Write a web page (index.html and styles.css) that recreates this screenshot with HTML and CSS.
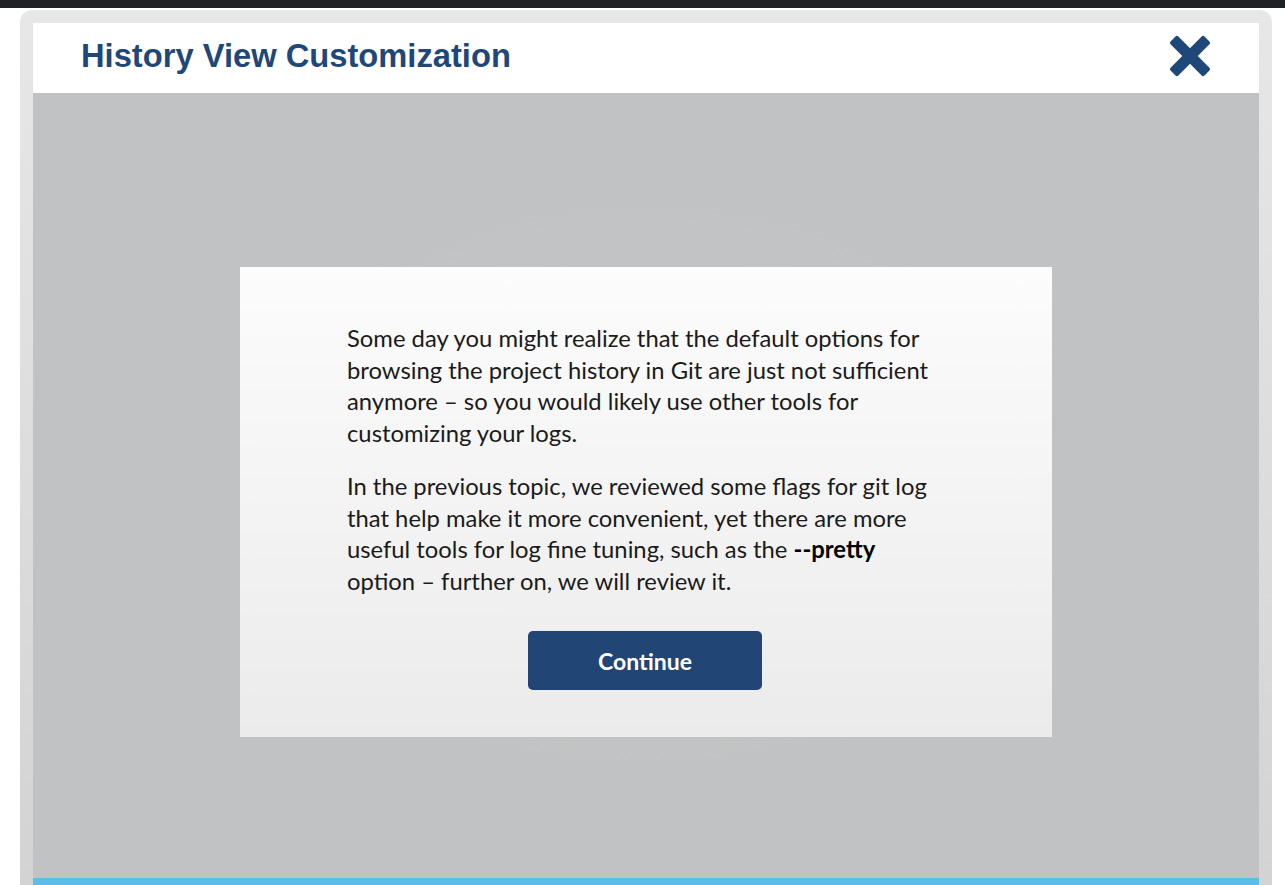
FILE: index.html
```html
<!DOCTYPE html>
<html lang="en">
<head>
<meta charset="utf-8">
<title>History View Customization</title>
<link rel="stylesheet" href="styles.css">
</head>
<body>
<div class="topbar"></div>
<div class="frame">
  <header class="header">
    <h1 class="title">History View Customization</h1>
    <button class="close" aria-label="Close">
      <svg width="42" height="42" viewBox="0 0 42 42">
        <g transform="translate(21 21)" fill="#1f4778">
          <rect x="-24" y="-5.5" width="48" height="11" rx="2" transform="rotate(45)"/>
          <rect x="-24" y="-5.5" width="48" height="11" rx="2" transform="rotate(-45)"/>
        </g>
      </svg>
    </button>
  </header>
  <main class="stage">
    <section class="dialog">
      <p>Some day you might realize that the default options for browsing the project history in Git are just not sufficient anymore – so you would likely use other tools for customizing your logs.</p>
      <p>In the previous topic, we reviewed some flags for git log that help make it more convenient, yet there are more useful tools for log fine tuning, such as the <b>--pretty</b> option – further on, we will review it.</p>
      <div class="actions"><button class="continue">Continue</button></div>
    </section>
  </main>
  <div class="bottombar"></div>
</div>
</body>
</html>
```

FILE: styles.css
```css
html, body {
  margin: 0;
  padding: 0;
  background: #ffffff;
  overflow: hidden;
  height: 885px;
}
.topbar {
  height: 8px;
  background: #202124;
}
.frame {
  box-sizing: border-box;
  margin: 2px 0 0 20px;
  width: 1252px;
  height: 875px;
  padding: 13px 13px 0;
  border-radius: 12px 12px 0 0;
  background: linear-gradient(#e7e7e7, #d3d3d3);
  display: flex;
  flex-direction: column;
}
.header {
  height: 70px;
  flex: none;
  background: #ffffff;
  display: flex;
  align-items: center;
  justify-content: space-between;
  padding: 0 48px;
}
.title {
  margin: 0 0 5px;
  font-family: "Liberation Sans", Arial, sans-serif;
  font-weight: bold;
  font-size: 32.7px;
  color: #1f4778;
}
.close {
  border: 0;
  background: none;
  padding: 0;
  width: 42px;
  height: 42px;
  margin-top: -5px;
  cursor: pointer;
}
.close svg { display: block; }
.stage {
  flex: 1;
  background: radial-gradient(ellipse 420px 300px at 50% 50%, #c6c7c6 0%, #c1c2c3 100%);
  display: flex;
  justify-content: center;
  align-items: flex-start;
}
.dialog {
  margin-top: 174px;
  width: 812px;
  height: 470px;
  box-sizing: border-box;
  padding: 56px 115px 0 107px;
  background: linear-gradient(#fcfcfc, #ebebeb);
  font-family: Lato, "Open Sans", sans-serif;
  font-size: 23.8px;
  line-height: 31.5px;
  color: #1b1b1b;
}
.dialog p {
  margin: 0 0 22px;
}
.dialog b {
  font-weight: bold;
  color: #000;
}
.actions {
  display: flex;
  justify-content: center;
  padding-top: 12px;
  padding-left: 6px;
}
.continue {
  width: 234px;
  height: 59px;
  border: 0;
  border-radius: 5px;
  background: #214575;
  color: #ffffff;
  font-family: Lato, "Open Sans", sans-serif;
  font-weight: bold;
  font-size: 23px;
  cursor: pointer;
}
.bottombar {
  height: 7px;
  flex: none;
  background: #5bbde8;
}
```
